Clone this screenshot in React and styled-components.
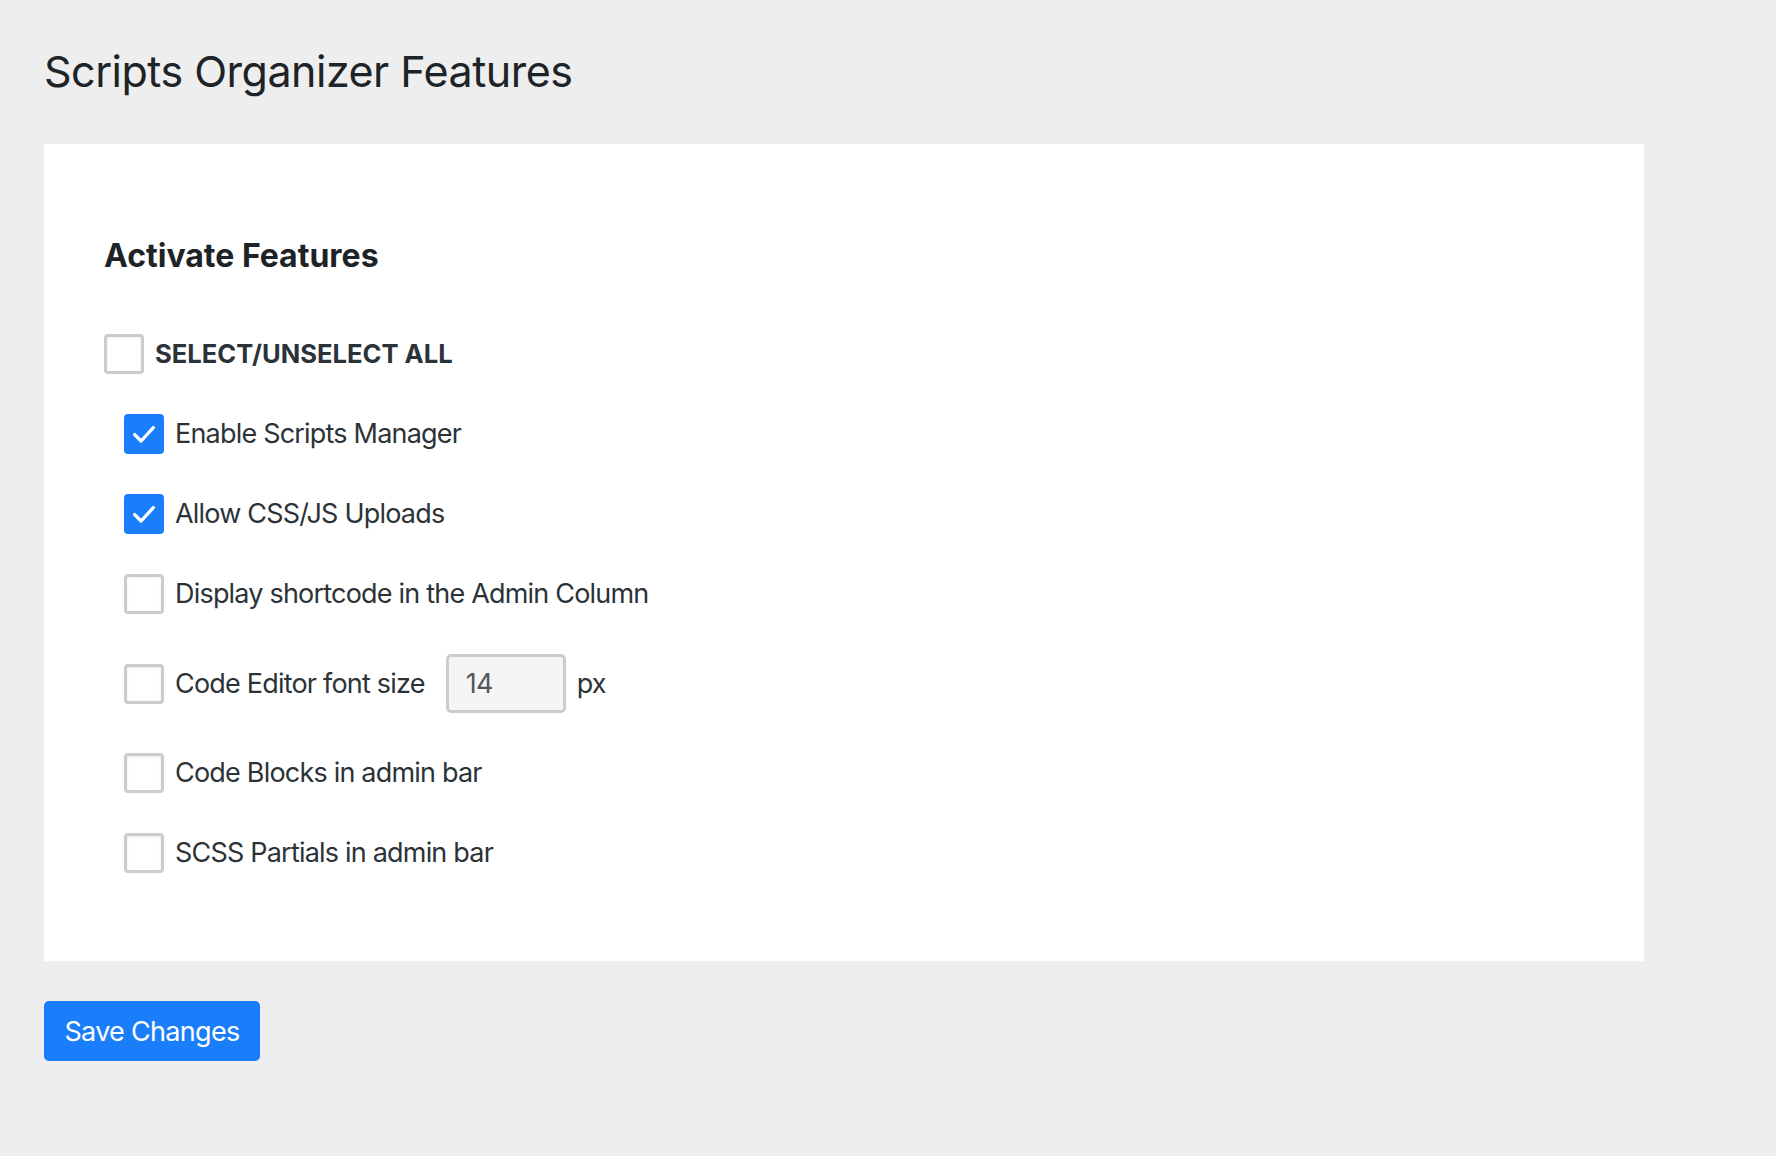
import React, { useState } from 'react';
import styled, { createGlobalStyle } from 'styled-components';

const BLUE = '#1a7efb';
const TEXT = '#2c3338';

const GlobalStyle = createGlobalStyle`
  html, body {
    margin: 0;
    padding: 0;
    background: #eeeeee;
    font-family: Inter, "Noto Sans", "Liberation Sans", sans-serif;
    color: ${TEXT};
  }
`;

const Page = styled.div`
  padding: 44px 44px 80px 44px;
  width: 1600px;
`;

const Title = styled.h1`
  margin: 0 0 45px 0;
  font-size: 43px;
  line-height: 55px;
  font-weight: 400;
  color: #1d2327;
  letter-spacing: -0.5px;
`;

const Panel = styled.section`
  background: #ffffff;
  padding: 93px 60px 88px 60px;
`;

const Heading = styled.h2`
  margin: 0 0 59px 0;
  font-size: 32px;
  line-height: 38px;
  font-weight: 700;
  color: #1d2327;
`;

const List = styled.div`
  display: flex;
  flex-direction: column;
  gap: 40px;
`;

const Row = styled.label`
  display: flex;
  align-items: center;
  gap: 11px;
  padding-left: ${(p) => (p.$indent ? '20px' : '0')};
  font-size: ${(p) => (p.$strong ? '25.6px' : '27px')};
  font-weight: ${(p) => (p.$strong ? 700 : 400)};
  letter-spacing: ${(p) => (p.$strong ? '0' : '-0.8px')};
  text-transform: ${(p) => (p.$strong ? 'uppercase' : 'none')};
  line-height: 40px;
  color: ${TEXT};
  cursor: pointer;
`;

const Box = styled.span`
  flex: none;
  box-sizing: border-box;
  width: 40px;
  height: 40px;
  border-radius: 4px;
  display: flex;
  align-items: center;
  justify-content: center;
  background: ${(p) => (p.$checked ? BLUE : '#ffffff')};
  border: 3px solid ${(p) => (p.$checked ? BLUE : '#cccccc')};
  box-shadow: ${(p) => (p.$checked ? 'none' : 'inset 0 1px 3px rgba(0,0,0,0.08)')};
`;

const SizeInput = styled.input`
  box-sizing: border-box;
  width: 120px;
  height: 59px;
  margin-left: 10px;
  padding: 0 17px;
  border: 3px solid #cccccc;
  border-radius: 5px;
  background: #f5f5f5;
  font-family: inherit;
  font-size: 27px;
  letter-spacing: -0.5px;
  color: #50575e;
  outline: none;
`;

const Unit = styled.span`
  font-size: 27px;
`;

const SaveButton = styled.button`
  margin-top: 40px;
  width: 216px;
  height: 60px;
  border: none;
  border-radius: 5px;
  background: ${BLUE};
  color: #ffffff;
  font-family: inherit;
  font-size: 27px;
  letter-spacing: -0.7px;
  font-weight: 400;
  cursor: pointer;
`;

const Check = ({ checked }) => (
  <Box $checked={checked}>
    {checked && (
      <svg width="28" height="28" viewBox="0 0 24 24">
        <path
          d="M4 12.5 L9.5 18 L20 6.5"
          fill="none"
          stroke="#ffffff"
          strokeWidth="2.8"
          strokeLinecap="round"
          strokeLinejoin="round"
        />
      </svg>
    )}
  </Box>
);

const features = [
  { key: 'manager', label: 'Enable Scripts Manager', on: true },
  { key: 'uploads', label: 'Allow CSS/JS Uploads', on: true },
  { key: 'shortcode', label: 'Display shortcode in the Admin Column', on: false },
  { key: 'fontsize', label: 'Code Editor font size', on: false, input: true },
  { key: 'blocks', label: 'Code Blocks in admin bar', on: false },
  { key: 'scss', label: 'SCSS Partials in admin bar', on: false },
];

export default function App() {
  const [state, setState] = useState(() =>
    Object.fromEntries(features.map((f) => [f.key, f.on])),
  );
  const [size, setSize] = useState('14');
  const all = features.every((f) => state[f.key]);

  const toggle = (key) => setState((s) => ({ ...s, [key]: !s[key] }));
  const toggleAll = () =>
    setState(Object.fromEntries(features.map((f) => [f.key, !all])));

  return (
    <>
      <GlobalStyle />
      <Page>
        <Title>Scripts Organizer Features</Title>
        <Panel>
          <Heading>Activate Features</Heading>
          <List>
            <Row $strong onClick={toggleAll}>
              <Check checked={all} />
              Select/Unselect All
            </Row>
            {features.map((f) => (
              <Row key={f.key} $indent onClick={() => toggle(f.key)}>
                <Check checked={state[f.key]} />
                {f.label}
                {f.input && (
                  <>
                    <SizeInput
                      value={size}
                      onClick={(e) => e.stopPropagation()}
                      onChange={(e) => setSize(e.target.value)}
                    />
                    <Unit>px</Unit>
                  </>
                )}
              </Row>
            ))}
          </List>
        </Panel>
        <SaveButton>Save Changes</SaveButton>
      </Page>
    </>
  );
}
